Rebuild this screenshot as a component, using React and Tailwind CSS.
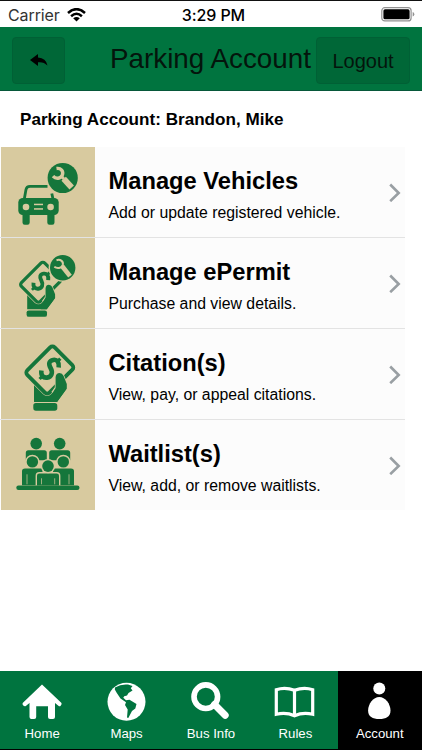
import React, { useState } from 'react';

const VehicleIcon = () => (
  <svg width="94" height="91" viewBox="1 0 94 91" fill="#15763b">
    <path d="M24.3 52L26 42.5Q26.6 39.3 30 39.3H47.5" fill="none" stroke="#15763b" strokeWidth="2.8" />
    <path d="M51.8 46.5L53 52" fill="none" stroke="#15763b" strokeWidth="2.8" />
    <rect x="18.3" y="51" width="40.4" height="17" rx="4.5" />
    <path d="M22.5 67H29.7V75.5Q29.7 77.7 27.5 77.7H24.7Q22.5 77.7 22.5 75.5ZM47.3 67H54.5V75.5Q54.5 77.7 52.3 77.7H49.5Q47.3 77.7 47.3 75.5Z" />
    <g fill="#d8ca9f">
      <circle cx="26" cy="60" r="3.3" />
      <circle cx="50.6" cy="60" r="3.3" />
      <rect x="34" y="56.7" width="9" height="1.5" />
      <rect x="34" y="61.2" width="9" height="1.5" />
    </g>
    <circle cx="62.7" cy="31" r="15.1" />
    <g fill="none" stroke="#d8ca9f">
      <path d="M56.5 21.5C61 20.8 63.8 24.5 62.3 28.2C60.8 31.7 56 32.4 53 29.2" strokeWidth="3.4" />
      <path d="M61.3 29.2L64 32" strokeWidth="3" />
      <path d="M63.7 31.7L71.7 40.5" strokeWidth="6" />
    </g>
  </svg>
);

// hand holding a bill, shared by the permit and citation tiles
const HandBill = () => (
  <g>
    <path d="M34 53V72.9H57L66.8 59.5V57L56 58L46 66Z" fill="#15763b" />
    <rect x="33.3" y="74.1" width="24" height="7.6" rx="2.6" fill="#15763b" />
    <g transform="translate(49.8 41) rotate(-45)">
      <rect x="-19.4" y="-15.7" width="38.8" height="31.4" rx="3.2" fill="#d8ca9f" stroke="#d8ca9f" strokeWidth="5" />
      <rect x="-19.4" y="-15.7" width="38.8" height="31.4" rx="3.2" fill="none" stroke="#15763b" strokeWidth="3.8" />
    </g>
    <path d="M52 63.5L55.6 58.5V48Q56.2 44 59.5 44Q62.3 44 63.6 47L66.8 55V59.5" fill="#d8ca9f" stroke="#d8ca9f" strokeWidth="1.6" />
    <path d="M51 66.5L55.6 59V48Q56.2 44 59.5 44Q62.3 44 63.6 47L66.8 55V59.5L57 72.9H50Z" fill="#15763b" />
    <g fill="none" stroke="#15763b">
      <path d="M58.7 38.5C59.3 33 57 30.3 53.3 30.9C49 31.6 48.2 34.8 50.6 39C53.3 43.8 51.5 48 47 48.6C43 49 40.7 46.3 41.4 41.5" strokeWidth="4.6" />
      <path d="M57 33L60.3 29.6M43 46.5L39.6 50" strokeWidth="3.2" />
    </g>
  </g>
);

const PermitIcon = () => (
  <svg width="94" height="91" viewBox="1 0 94 91">
    <g transform="translate(-1.7 9.4) scale(.85)">
      <HandBill />
    </g>
    <circle cx="62.7" cy="29.7" r="14.1" fill="#d8ca9f" />
    <circle cx="62.7" cy="29.7" r="12.7" fill="#15763b" />
    <g fill="none" stroke="#d8ca9f">
      <path d="M56.5 22.2C60.7 20.8 63.7 23.8 62.7 27C61.5 30.2 57.3 31 54.3 28.8" strokeWidth="2" />
      <path d="M62 28L70 38.2" strokeWidth="4.6" />
    </g>
  </svg>
);

const CitationIcon = () => (
  <svg width="94" height="91" viewBox="1 0 94 91">
    <HandBill />
  </svg>
);

const WaitlistIcon = () => (
  <svg width="94" height="91" viewBox="1 .7 94 91" fill="#15763b">
    <circle cx="36.2" cy="24.3" r="5.8" />
    <circle cx="59.7" cy="24.3" r="5.8" />
    <path d="M25.8 41V33.5Q25.8 31 28.3 31H44.3Q46.8 31 46.8 33.5V41ZM49.2 41V33.5Q49.2 31 51.7 31H67.7Q70.2 31 70.2 33.5V41Z" />
    <circle cx="32.4" cy="42.6" r="7.2" fill="#d8ca9f" />
    <circle cx="63.3" cy="42.6" r="7.2" fill="#d8ca9f" />
    <circle cx="32.4" cy="42.6" r="5.7" />
    <circle cx="63.3" cy="42.6" r="5.7" />
    <path d="M22 66V52Q22 49.3 25 49.3H42.5V66ZM74 66V52Q74 49.3 71 49.3H53V66Z" />
    <path d="M36.3 67V56.5Q36.3 53.5 39.3 53.5H56.7Q59.7 53.5 59.7 56.5V67Z" stroke="#d8ca9f" strokeWidth="1.4" />
    <circle cx="48" cy="46.8" r="7.2" fill="#d8ca9f" />
    <circle cx="48" cy="46.8" r="5.8" />
    <path d="M27 65V55M69 65V55M41.5 65V59M54.7 65V59" stroke="#d8ca9f" strokeWidth=".7" />
    <rect x="16.3" y="66.3" width="63.2" height="4.4" rx="2.2" />
  </svg>
);

const menuItems = [
  { title: 'Manage Vehicles', text: 'Add or update registered vehicle.', Icon: VehicleIcon },
  { title: 'Manage ePermit', text: 'Purchase and view details.', Icon: PermitIcon },
  { title: 'Citation(s)', text: 'View, pay, or appeal citations.', Icon: CitationIcon },
  { title: 'Waitlist(s)', text: 'View, add, or remove waitlists.', Icon: WaitlistIcon },
];

const HomeIcon = () => (
  <svg width="40" height="40" viewBox="0 0 40 40" fill="#fff">
    <path d="M20 2.5L39.5 21Q40 22.2 38.7 23.7Q37.6 24.7 36.4 23.7L33 21V35Q33 37 31 37H28Q26 37 26 35V24.2H14.2V35Q14.2 37 12.2 37H9.5Q7.5 37 7.5 35V21L3.8 24Q2.5 24.8 1.3 23.5Q0 22.3 .7 21Z" />
  </svg>
);

const MapsIcon = () => (
  <svg width="40" height="40" viewBox="0 0 40 40">
    <circle cx="19.5" cy="19.7" r="19" fill="#fff" />
    <path d="M8 5.5Q14 1.8 21 2.5L25.5 4L23.8 6.3L25.5 8.5L21.5 11L20 13.5L17.2 14.3L16.3 15.8L19 18.2L22.5 17.7L29.5 22L28.3 26.5L25 29L21.3 36L20 35.5L20.7 27.5L18 23L19 20.2L13.5 16.5L9.8 11L7.8 7.5Z" fill="#00743f" />
  </svg>
);

const SearchIcon = () => (
  <svg width="40" height="40" viewBox="0 0 40 40" fill="none" stroke="#fff">
    <circle cx="14.8" cy="14.7" r="11.8" strokeWidth="5.6" />
    <path d="M23.5 22.5L34.2 33.2" strokeWidth="7" strokeLinecap="round" />
  </svg>
);

const RulesIcon = () => (
  <svg width="42" height="40" viewBox="0 0 42 40" fill="none" stroke="#fff" strokeWidth="3.2">
    <path d="M20.5 8.3Q11 4.6 2.3 7.7V32.3Q12 30 20.5 33.7Q29 30 38.7 32.3V7.7Q30 4.6 20.5 8.3V33" />
  </svg>
);

const AccountIcon = () => (
  <svg width="40" height="40" viewBox="0 0 40 40" fill="#fff">
    <circle cx="19.3" cy="6.5" r="6" />
    <path d="M19.3 15C25.3 15 30.5 22 30.5 28.5C30.5 34.7 26 37 19.3 37S8.1 34.7 8.1 28.5C8.1 22 13.3 15 19.3 15Z" />
  </svg>
);

const tabs = [
  { name: 'Home', Icon: HomeIcon },
  { name: 'Maps', Icon: MapsIcon },
  { name: 'Bus Info', Icon: SearchIcon },
  { name: 'Rules', Icon: RulesIcon },
  { name: 'Account', Icon: AccountIcon },
];

const StatusBar = () => (
  <div className="grid h-[27px] grid-cols-3 items-center border-t border-[#111] bg-white pt-[1px] pr-[7px] pl-[8px] font-[Inter,sans-serif] text-[16px]">
    <div className="flex items-center gap-[7px]">
      <span className="tracking-[-0.1px] text-[#333]">Carrier</span>
      <svg width="19" height="14" viewBox="0 0 19 14" fill="none" stroke="#000" strokeWidth="2.5">
        <path d="M1 5Q9.5-2.7 18 5M4.1 8.2Q9.5 3.4 14.9 8.2" />
        <path d="M6.2 10.2Q9.5 7.7 12.8 10.2L9.5 13.4Z" fill="#000" stroke="none" />
      </svg>
    </div>
    <span className="pl-[4px] text-center font-medium tracking-[-0.1px]">3:29 PM</span>
    <svg className="justify-self-end" width="34" height="15" viewBox="0 0 34 15">
      <rect x=".8" y=".7" width="29.3" height="13.2" rx="3" fill="#fff" stroke="#929292" strokeWidth="1.2" />
      <rect x="2.4" y="2.3" width="26.2" height="10" rx="1.6" />
      <path d="M31.7 5Q33.3 5.5 33.3 7.3T31.7 9.6Z" fill="#929292" />
    </svg>
  </div>
);

const Header = () => (
  <header className="flex h-[63.5px] items-start justify-between border-b border-[#07583a] bg-[#00743f] px-[12px] pt-[10px]">
    <button className="flex h-[47px] w-[53px] items-center justify-center rounded-[4px] border border-[#006035] bg-[#006737]">
      <svg width="18" height="13" viewBox="0 0 18 13">
        <path d="M0 6L8 0V3.4Q16 3.8 17.5 11.5Q13.5 7.5 8 8.3V12Z" />
      </svg>
    </button>
    <h1 className="ml-[45px] flex-1 pt-[6px] text-[27.8px] leading-[32px] whitespace-nowrap text-[#04150c]">Parking Account</h1>
    <button className="h-[47px] w-[94px] rounded-[4px] border border-[#006035] bg-[#006737] text-[20px] text-[#04150c]">
      Logout
    </button>
  </header>
);

const App = () => {
  const [activeTab, setActiveTab] = useState('Account');

  return (
    <div className="flex h-[750px] w-[422px] flex-col overflow-hidden bg-white font-['Liberation_Sans',Arial,sans-serif] text-black">
      <StatusBar />
      <Header />

      <main className="flex-1">
        <h2 className="h-[56px] pt-[18px] pl-[20px] text-[17.1px] leading-[22px] font-bold">
          Parking Account: Brandon, Mike
        </h2>
        <ul className="w-[405.4px]">
          {menuItems.map(({ title, text, Icon }) => (
            <li key={title} className="flex h-[91px] border-b border-[#e3e3e3] bg-[#fcfcfc] pl-px last:h-[90px] last:border-b-0">
              <div className="w-[94px] overflow-hidden bg-[#d8ca9f]">
                <Icon />
              </div>
              <div className="flex-1 pt-[20px] pl-[13.5px]">
                <h3 className="text-[23.7px] leading-[28px] font-bold">{title}</h3>
                <p className="pt-[8px] text-[15.8px] leading-[20px]">{text}</p>
              </div>
              <svg className="mr-[3px] self-center" width="14" height="20" viewBox="0 0 14 20" fill="none" stroke="#999fa3" strokeWidth="2.6">
                <path d="M2.2 2.5L10.7 11L2.2 19.2" />
              </svg>
            </li>
          ))}
        </ul>
      </main>

      <nav className="grid h-[79px] grid-cols-5 border-b border-black bg-[#00743f]">
        {tabs.map(({ name, Icon }) => (
          <button
            key={name}
            onClick={() => setActiveTab(name)}
            className={`flex flex-col items-center pt-[11px] text-[13.2px] leading-[16px] text-white ${
              activeTab === name ? 'bg-black' : ''
            }`}
          >
            <Icon />
            <span className="pt-[4px]">{name}</span>
          </button>
        ))}
      </nav>
    </div>
  );
};

export default App;
